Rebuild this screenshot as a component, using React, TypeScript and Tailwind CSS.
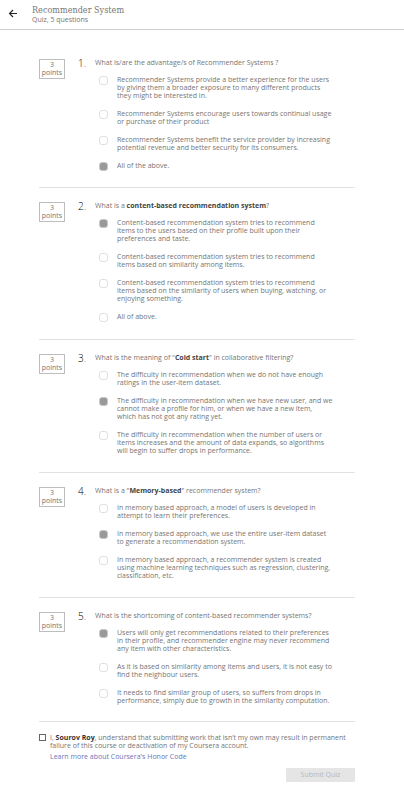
import React, { useState } from "react";

type Question = {
  title: React.ReactNode;
  options: string[];
  answer: number;
};

const questions: Question[] = [
  {
    title: "What is/are the advantage/s of Recommender Systems ?",
    options: [
      "Recommender Systems provide a better experience for the users by giving them a broader exposure to many different products they might be interested in.",
      "Recommender Systems encourage users towards continual usage or purchase of their product",
      "Recommender Systems benefit the service provider by increasing potential revenue and better security for its consumers.",
      "All of the above.",
    ],
    answer: 3,
  },
  {
    title: (
      <>
        What is a <b className="text-[#444]">content-based recommendation system</b>?
      </>
    ),
    options: [
      "Content-based recommendation system tries to recommend items to the users based on their profile built upon their preferences and taste.",
      "Content-based recommendation system tries to recommend items based on similarity among items.",
      "Content-based recommendation system tries to recommend items based on the similarity of users when buying, watching, or enjoying something.",
      "All of above.",
    ],
    answer: 0,
  },
  {
    title: (
      <>
        What is the meaning of "<b className="text-[#444]">Cold start</b>" in collaborative filtering?
      </>
    ),
    options: [
      "The difficulty in recommendation when we do not have enough ratings in the user-item dataset.",
      "The difficulty in recommendation when we have new user, and we cannot make a profile for him, or when we have a new item, which\u00a0has not got any rating yet.",
      "The difficulty in recommendation when the number of users or items increases and the amount of data expands, so algorithms will begin to suffer drops in performance.",
    ],
    answer: 1,
  },
  {
    title: (
      <>
        What is a "<b className="text-[#444]">Memory-based</b>" recommender system?
      </>
    ),
    options: [
      "In memory based approach, a model of users is developed in attempt to learn their preferences.",
      "In memory based approach, we use the entire user-item dataset to generate a recommendation system.",
      "In memory based approach, a recommender system is created using machine learning techniques such as regression, clustering, classification, etc.",
    ],
    answer: 1,
  },
  {
    title: "What is the shortcoming of content-based recommender systems?",
    options: [
      "Users will only get recommendations related to their preferences in their profile, and recommender engine may never recommend any item with other characteristics.",
      "As it is based on similarity among items and users, it is not easy to find the neighbour users.",
      "It needs to find similar group of users, so suffers from drops in performance, simply due to growth in the similarity computation.",
    ],
    answer: 0,
  },
];

function QuestionBlock({ question, index }: { question: Question; index: number }) {
  const [selected, setSelected] = useState(question.answer);
  return (
    <section className="flex items-start border-b border-[#e1e1e1] pt-[14px] pb-[17px] first:pb-[16px] last:pb-[16px]">
      <div className="w-[26px] shrink-0 border border-[#bdbdbd] py-px text-center leading-[8px]">
        3<br />
        points
      </div>
      <div className="ml-[13px] w-[17px] shrink-0 text-[10px] leading-[8px] font-light text-black">
        {index + 1}
        <span className="text-[#777]">.</span>
      </div>
      <fieldset className="min-w-0 flex-1">
        <legend className="mb-[9px]">{question.title}</legend>
        <div className="flex flex-col gap-[10px] pr-[21px] pl-[4px]">
          {question.options.map((option, i) => (
            <label key={option} className="flex items-start gap-[9px]">
              <input
                type="radio"
                name={`question-${index + 1}`}
                checked={selected === i}
                onChange={() => setSelected(i)}
                className="h-[9px] w-[9px] shrink-0 appearance-none rounded-[3px] border border-[#e0e0e0] bg-white checked:border-[#c8c8c8] checked:bg-[#999]"
              />
              <span>{option}</span>
            </label>
          ))}
        </div>
      </fieldset>
    </section>
  );
}

export default function App() {
  const [agreed, setAgreed] = useState(false);
  return (
    <div className="min-h-screen bg-white font-['Open_Sans',sans-serif] text-[7px] leading-[8px] text-[#757575]">
      <header className="flex h-[30px] items-center border-b border-[#cfcfcf] pb-[2px] pl-[8px]">
        <button type="button" aria-label="Back" className="flex h-[10px] w-[10px] items-center justify-center">
          <svg viewBox="0 0 10 10" className="h-[10px] w-[10px]" fill="none" stroke="#222" strokeWidth="1.1">
            <path d="M9 4.5H1.7M5 1L1.5 4.5L5 8" />
          </svg>
        </button>
        <div className="ml-[14px] pt-px">
          <h1 className="font-['DejaVu_Serif_Condensed','DejaVu_Serif',serif] text-[9px] leading-[11px] text-[#777]">
            Recommender System
          </h1>
          <p>Quiz, 5 questions</p>
        </div>
      </header>

      <main className="pt-[15px] pr-[49px] pb-[14px] pl-[39px]">
        <div>
          {questions.map((question, i) => (
            <QuestionBlock key={i} question={question} index={i} />
          ))}
        </div>

        <div className="mt-[12px] flex items-start gap-[4px]">
          <input
            id="honor"
            type="checkbox"
            checked={agreed}
            onChange={(e) => setAgreed(e.target.checked)}
            className="h-[7px] w-[7px] shrink-0 appearance-none border border-[#666] bg-white checked:bg-[#999]"
          />
          <div>
            <label htmlFor="honor" className="block">
              I, <b className="text-[#333]">Sourov Roy</b>, understand that submitting work that isn’t my own may result in
              permanent failure of this course or deactivation of my Coursera account.
            </label>
            <a href="#honor-code" className="mt-[3px] block text-[#6a76b8]">
              Learn more about Coursera's Honor Code
            </a>
          </div>
        </div>

        <div className="mt-[7px] flex justify-end">
          <button type="button" disabled className="h-[14px] w-[69px] bg-[#e5e5e5] text-[#b8b8b8]">
            Submit Quiz
          </button>
        </div>
      </main>
    </div>
  );
}
